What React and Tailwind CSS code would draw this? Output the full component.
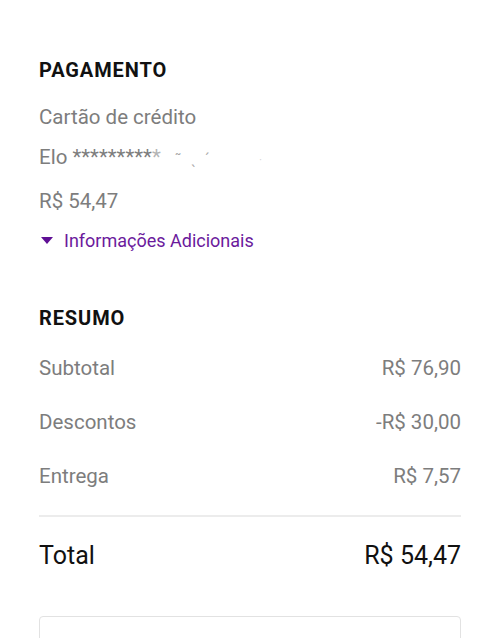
import React from "react";

const font = { fontFamily: "Roboto, 'Noto Sans', sans-serif" };

function Row({ label, value }) {
  return (
    <div className="flex justify-between items-baseline text-[20.5px] leading-[54px] text-[#7d7d7d]">
      <span>{label}</span>
      <span>{value}</span>
    </div>
  );
}

export default function App() {
  return (
    <div className="w-[500px] h-[638px] overflow-hidden bg-white px-[39px] pt-[55px]" style={font}>
      <h2 className="text-[20px] font-bold tracking-[0.9px] text-[#111] leading-[30px]">PAGAMENTO</h2>
      <div className="mt-[12px] text-[20.5px] leading-[40px] text-[#7d7d7d]">
        <div>Cartão de crédito</div>
        <div className="relative">
          <span>Elo *********</span>
          <span className="text-[#b5b5b5]">*</span>
          <span className="ml-[14px] text-[14px] text-[#a8a8a8] tracking-[10px]">˜ˎˊ</span>
          <span className="ml-[40px] text-[10px] text-[#d0d0d0]">·</span>
        </div>
        <div>R$ 54,47</div>
        <div className="flex items-center text-[18px] text-[#6b1a9c]">
          <svg width="14" height="10" viewBox="0 0 14 10" className="ml-[1px] mr-[10px]">
            <polygon points="1,1 13,1 7,8" fill="#5f0f95" />
          </svg>
          <span>Informações Adicionais</span>
        </div>
      </div>

      <h2 className="mt-[42px] text-[20px] font-bold tracking-[0.9px] text-[#111] leading-[30px]">RESUMO</h2>
      <div className="mt-[8px]">
        <Row label="Subtotal" value="R$ 76,90" />
        <Row label="Descontos" value="-R$ 30,00" />
        <Row label="Entrega" value="R$ 7,57" />
      </div>
      <div className="mt-[12px] h-[2px] bg-[#ececec]" />
      <div className="flex justify-between items-baseline text-[25px] text-[#111] leading-[78px]">
        <span>Total</span>
        <span>R$ 54,47</span>
      </div>
      <div className="mt-[21px] h-[60px] rounded-[4px] border border-[#e2e2e2]" />
    </div>
  );
}
